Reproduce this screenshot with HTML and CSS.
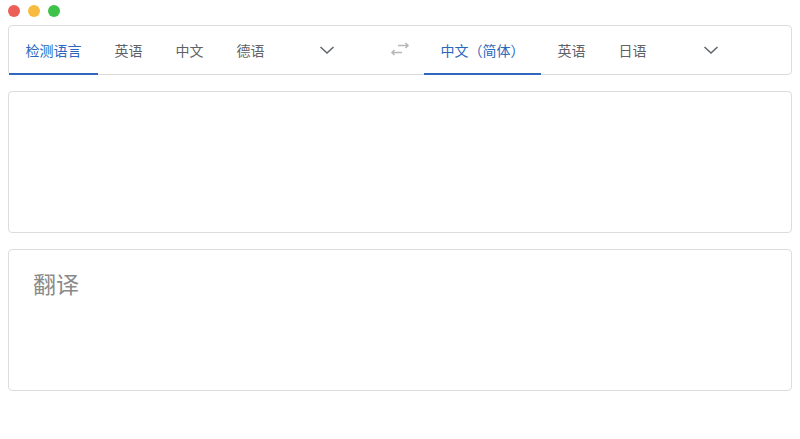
FILE: index.html
```html
<!DOCTYPE html>
<html lang="zh-CN">
<head>
  <meta charset="UTF-8">
  <title>翻译</title>
  <link rel="stylesheet" href="styles.css">
</head>
<body>
  <div class="titlebar">
    <span class="light red"></span>
    <span class="light yellow"></span>
    <span class="light green"></span>
  </div>
  <main class="main">
    <div class="lang-bar">
      <div class="lang-side">
        <a href="#" class="tab active">检测语言</a>
        <a href="#" class="tab">英语</a>
        <a href="#" class="tab">中文</a>
        <a href="#" class="tab">德语</a>
        <button class="more">
          <svg width="16" height="16" viewBox="0 0 16 16"><path d="M1.5 5 L8 11 L14.5 5" fill="none" stroke="#5f6368" stroke-width="1.5"/></svg>
        </button>
      </div>
      <button class="swap">
        <svg width="20" height="16" viewBox="0 0 20 16"><path d="M8 3.5 H18 M15.5 1 L18 3.5 L15.5 6 M12 10.5 H2 M4.5 8 L2 10.5 L4.5 13" fill="none" stroke="#b8b8b8" stroke-width="1.6"/></svg>
      </button>
      <div class="lang-side">
        <a href="#" class="tab active">中文（简体）</a>
        <a href="#" class="tab">英语</a>
        <a href="#" class="tab">日语</a>
        <button class="more more-right">
          <svg width="16" height="16" viewBox="0 0 16 16"><path d="M1.5 5 L8 11 L14.5 5" fill="none" stroke="#5f6368" stroke-width="1.5"/></svg>
        </button>
      </div>
    </div>
    <div class="card">
      <textarea class="source"></textarea>
    </div>
    <div class="card output">
      <p class="placeholder">翻译</p>
    </div>
  </main>
</body>
</html>
```

FILE: styles.css
```css
body {
  margin: 0;
  background-color: #fff;
  font-family: "Noto Sans CJK SC", "Noto Sans", sans-serif;
}

.titlebar {
  height: 25px;
  display: flex;
  align-items: flex-start;
  gap: 8px;
  padding: 5px 0 0 8px;
  box-sizing: border-box;
}

.light {
  width: 12px;
  height: 12px;
  border-radius: 50%;
}

.red { background-color: #ec5f58; }
.yellow { background-color: #f7bb3f; }
.green { background-color: #3fc24a; }

.main {
  display: flex;
  flex-direction: column;
  gap: 16px;
  padding: 0 8px;
}

.lang-bar {
  display: flex;
  height: 50px;
  box-sizing: border-box;
  border: 1px solid #dcdcdc;
  border-radius: 4px;
}

.lang-side {
  flex: 1;
  display: flex;
}

.tab {
  display: flex;
  align-items: center;
  padding: 0 16.5px;
  font-size: 14px;
  color: #5f6368;
  text-decoration: none;
  border-bottom: 2px solid transparent;
  margin-bottom: -1px;
}

.tab.active {
  color: #2a67bd;
  border-bottom-color: #3068c0;
}

.more, .swap {
  border: none;
  background: none;
  padding: 0;
  width: 48px;
  display: flex;
  align-items: center;
  justify-content: center;
}

.more {
  margin-left: 22px;
}

.more-right {
  margin-left: 24px;
}

.card {
  height: 142px;
  box-sizing: border-box;
  border: 1px solid #dcdcdc;
  border-radius: 4px;
}

.source {
  width: 100%;
  height: 100%;
  border: none;
  resize: none;
  background: none;
  outline: none;
}

.placeholder {
  margin: 0;
  padding: 16px 24px;
  font-size: 23px;
  color: #8a8a8a;
}
```
